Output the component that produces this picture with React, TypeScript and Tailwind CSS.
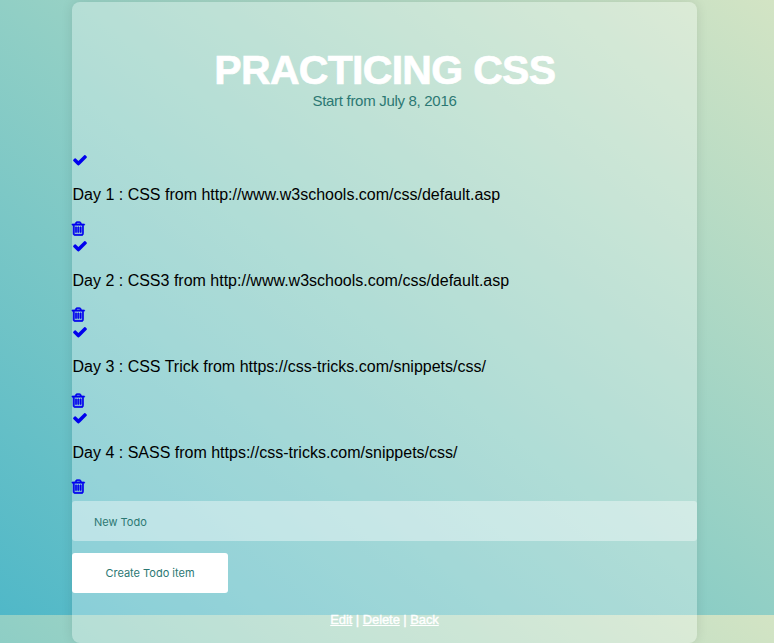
const todos = [
  "Day 1 : CSS from http://www.w3schools.com/css/default.asp",
  "Day 2 : CSS3 from http://www.w3schools.com/css/default.asp",
  "Day 3 : CSS Trick from https://css-tricks.com/snippets/css/",
  "Day 4 : SASS from https://css-tricks.com/snippets/css/",
];

function CheckIcon() {
  return (
    <svg viewBox="0 0 1792 1792" className="block h-4 w-4" fill="currentColor">
      <path d="M1671 566q0 40-28 68l-724 724-136 136q-28 28-68 28t-68-28l-136-136-362-362q-28-28-28-68t28-68l136-136q28-28 68-28t68 28l294 295 656-657q28-28 68-28t68 28l136 136q28 28 28 68z" />
    </svg>
  );
}

function TrashIcon() {
  return (
    <svg viewBox="0 0 1408 1792" className="block h-4 w-[12.6px] overflow-visible" fill="currentColor" stroke="currentColor" strokeWidth="80">
      <path d="M512 800v576q0 14-9 23t-23 9h-64q-14 0-23-9t-9-23V800q0-14 9-23t23-9h64q14 0 23 9t9 23zm256 0v576q0 14-9 23t-23 9h-64q-14 0-23-9t-9-23V800q0-14 9-23t23-9h64q14 0 23 9t9 23zm256 0v576q0 14-9 23t-23 9h-64q-14 0-23-9t-9-23V800q0-14 9-23t23-9h64q14 0 23 9t9 23zm128 724V576H256v948q0 22 7 40.500t14.500 27 10.500 8.500h832q3 0 10.500-8.500t14.500-27 7-40.500zM480 448h448l-48-117q-7-9-17-11H546q-10 2-17 11zm928 32v64q0 14-9 23t-23 9h-96v948q0 83-47 143.500t-113 60.500H288q-66 0-113-58.500T128 1528V576H32q-14 0-23-9t-9-23v-64q0-14 9-23t23-9h309l70-167q15-37 54-63t79-26h320q40 0 79 26t54 63l70 167h309q14 0 23 9t9 23z" />
    </svg>
  );
}

export default function App() {
  return (
    <div className="h-[643px] w-full overflow-hidden bg-[linear-gradient(to_top_right,#50b8c8,#91cfc5_50%,#d3e4c4)] bg-[length:100%_615px] bg-repeat-y pt-[2px] font-['Liberation_Sans',Arial,sans-serif]">
      <main className="ml-[72px] flex h-[641px] w-[625px] flex-col rounded-lg bg-white/30 shadow-[0_0_12px_rgba(0,0,0,0.1)]">
        <header className="flex h-[150px] flex-col items-center pt-[44px]">
          <h1 className="-mr-[0.7px] text-[41px] leading-[48px] font-bold tracking-[-0.7px] whitespace-nowrap text-white [-webkit-text-stroke:0.7px_white]">PRACTICING CSS</h1>
          <p className="-mt-[2px] text-[15px] leading-[17px] tracking-[-0.3px] text-[#2c7873]">Start from July 8, 2016</p>
        </header>
        <ul className="h-[347px]">
          {todos.map((todo) => (
            <li key={todo} className="h-[86px]">
              <a href="#" className="block w-4 text-[#0000ee]"><CheckIcon /></a>
              <p className="mt-[18px] h-[18px] pl-[0.5px] text-[16px] leading-[18px] whitespace-nowrap text-black">{todo}</p>
              <a href="#" className="mt-[16px] block w-4 text-[#0000ee]"><TrashIcon /></a>
            </li>
          ))}
        </ul>
        <form className="mt-[2px] flex flex-col items-start gap-3 font-['Inter',sans-serif] text-[11px]">
          <input
            type="text"
            placeholder="New Todo"
            className="h-10 w-full rounded-[3px] bg-white/40 px-[22px] pt-[2px] text-[#2c7873] outline-none placeholder:text-[#2c7873]"
          />
          <button type="button" className="h-10 w-[156px] rounded-[3px] bg-white text-[#2c7873]">Create Todo item</button>
        </form>
        <nav className="mt-[18px] text-center text-[13px] leading-[18px] tracking-[-0.08px] text-white [-webkit-text-stroke:0.4px_white]">
          <a href="#" className="underline">Edit</a> | <a href="#" className="underline">Delete</a> | <a href="#" className="underline">Back</a>
        </nav>
      </main>
    </div>
  );
}
